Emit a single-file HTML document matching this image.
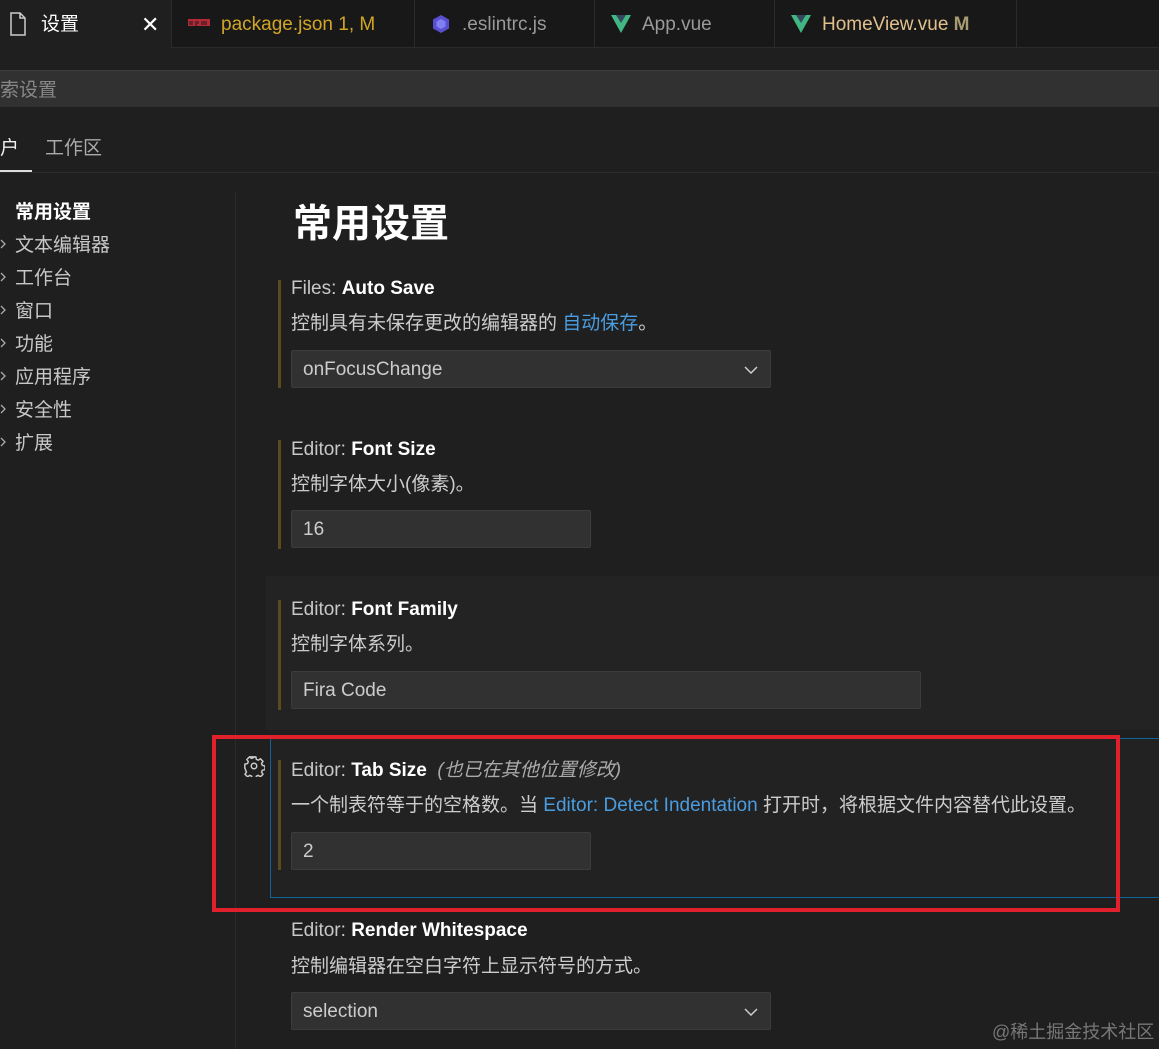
<!DOCTYPE html>
<html><head><meta charset="utf-8"><style>
*{margin:0;padding:0;box-sizing:border-box}
body{width:1159px;height:1049px;background:#1f1f1f;overflow:hidden;position:relative;font-family:"Liberation Sans","Noto Sans CJK SC",sans-serif;color:#ccc}
.a{position:absolute;white-space:nowrap}
.tabs{position:absolute;left:0;top:0;width:1159px;height:48px;background:#181818;border-bottom:1px solid #2b2b2b}
.tab{position:absolute;top:0;height:48px;border-right:1px solid #2b2b2b;font-size:19px;line-height:50px}
.t{font-size:19px;line-height:24px}
.lbl{color:#c8c8c8}.lbl b{color:#fff;font-weight:bold}
.bar{position:absolute;left:278px;width:3px;background:#5c4a1e}
.inp{position:absolute;left:291px;height:38px;background:#313131;border:1px solid #3c3c3c;border-radius:2px;font-size:19px;line-height:38px;padding-left:11px;color:#ccc}
.side{position:absolute;left:15px;font-size:19px;color:#c8c8c8}
.chev{position:absolute;left:0px;width:6px;height:10px}
</style></head><body>
<div class="tabs">
 <div class="tab" style="left:0;width:172px;background:#1f1f1f;color:#fff">
  <svg class="a" style="left:9px;top:12px" width="18" height="24" viewBox="0 0 18 24"><path d="M2 1h9l5 5v17H2z M11 1v5h5" fill="none" stroke="#ccc" stroke-width="1.5"/></svg>
  <span class="a" style="left:41px">设置</span><span class="a" style="left:141px;font-size:22px">✕</span></div>
 <div class="tab" style="left:172px;width:243px;color:#d1a626">
  <svg class="a" style="left:16px;top:19px" width="22" height="8" viewBox="0 0 22 8"><rect x="0" y="0" width="22" height="7" fill="#b62a37"/><path d="M2 2v4M4 2v4M8 2v5M10 2v3M14 2v4M16 2v4M18 2v4" stroke="#181818" stroke-width="1"/></svg>
  <span class="a" style="left:49px">package.json 1, M</span></div>
 <div class="tab" style="left:415px;width:180px;color:#9a9a9a">
  <svg class="a" style="left:16px;top:14px" width="20" height="20" viewBox="0 0 20 20"><polygon points="10,1 18,5.5 18,14.5 10,19 2,14.5 2,5.5" fill="#5a4fcf"/><polygon points="10,5 14.5,7.5 14.5,12.5 10,15 5.5,12.5 5.5,7.5" fill="#8080f2"/></svg>
  <span class="a" style="left:47px">.eslintrc.js</span></div>
 <div class="tab" style="left:595px;width:180px;color:#9a9a9a">
  <svg class="a" style="left:16px;top:15px" width="20" height="18" viewBox="0 0 20 18"><polygon points="0,0 20,0 10,18" fill="#41b883"/><polygon points="5,0 15,0 10,8" fill="#35495e"/></svg>
  <span class="a" style="left:47px">App.vue</span></div>
 <div class="tab" style="left:775px;width:242px;color:#e2c08d">
  <svg class="a" style="left:16px;top:15px" width="20" height="18" viewBox="0 0 20 18"><polygon points="0,0 20,0 10,18" fill="#41b883"/><polygon points="5,0 15,0 10,8" fill="#35495e"/></svg>
  <span class="a" style="left:47px">HomeView.vue <b style="color:#a89b73">M</b></span></div>
</div>
<div class="a" style="left:0;top:70px;width:1159px;height:37px;background:#313131;border-top:1px solid #3c3c3c"></div>
<div class="a t" style="left:0;top:79px;color:#888">索设置</div>
<div class="a t" style="left:0;top:137px;color:#eee">户</div>
<div class="a t" style="left:45px;top:137px;color:#aaa">工作区</div>
<div class="a" style="left:0;top:170px;width:32px;height:2px;background:#ddd"></div>
<div class="a" style="left:0;top:172px;width:1159px;height:1px;background:#2b2b2b"></div>
<div class="a" style="left:235px;top:192px;width:1px;height:857px;background:#2b2b2b"></div>
<div class="side" style="top:197px;color:#fff;font-weight:bold">常用设置</div>
<div class="side" style="top:230px">文本编辑器</div>
<div class="side" style="top:263px">工作台</div>
<div class="side" style="top:296px">窗口</div>
<div class="side" style="top:329px">功能</div>
<div class="side" style="top:362px">应用程序</div>
<div class="side" style="top:395px">安全性</div>
<div class="side" style="top:428px">扩展</div>
<svg class="chev" style="top:239px" viewBox="0 0 6 10"><path d="M1 1l4 4-4 4" fill="none" stroke="#aaa" stroke-width="1.3"/></svg>
<svg class="chev" style="top:272px" viewBox="0 0 6 10"><path d="M1 1l4 4-4 4" fill="none" stroke="#aaa" stroke-width="1.3"/></svg>
<svg class="chev" style="top:305px" viewBox="0 0 6 10"><path d="M1 1l4 4-4 4" fill="none" stroke="#aaa" stroke-width="1.3"/></svg>
<svg class="chev" style="top:338px" viewBox="0 0 6 10"><path d="M1 1l4 4-4 4" fill="none" stroke="#aaa" stroke-width="1.3"/></svg>
<svg class="chev" style="top:371px" viewBox="0 0 6 10"><path d="M1 1l4 4-4 4" fill="none" stroke="#aaa" stroke-width="1.3"/></svg>
<svg class="chev" style="top:404px" viewBox="0 0 6 10"><path d="M1 1l4 4-4 4" fill="none" stroke="#aaa" stroke-width="1.3"/></svg>
<svg class="chev" style="top:437px" viewBox="0 0 6 10"><path d="M1 1l4 4-4 4" fill="none" stroke="#aaa" stroke-width="1.3"/></svg>
<div class="a" style="left:293px;top:200px;font-size:39px;font-weight:bold;color:#fff;line-height:50px">常用设置</div>

<div class="bar" style="top:280px;height:108px"></div>
<div class="a t lbl" style="left:291px;top:277px">Files: <b>Auto Save</b></div>
<div class="a t" style="left:291px;top:312px">控制具有未保存更改的编辑器的 <span style="color:#4a9de0">自动保存</span>。</div>
<div class="inp" style="top:350px;width:480px">onFocusChange<svg class="a" style="right:12px;top:15px" width="14" height="8"><path d="M1 1l6 6 6-6" fill="none" stroke="#ccc" stroke-width="1.5"/></svg></div>

<div class="bar" style="top:440px;height:109px"></div>
<div class="a t lbl" style="left:291px;top:438px">Editor: <b>Font Size</b></div>
<div class="a t" style="left:291px;top:473px">控制字体大小(像素)。</div>
<div class="inp" style="top:510px;width:300px">16</div>

<div class="a" style="left:266px;top:576px;width:893px;height:154px;background:#232323"></div>
<div class="bar" style="top:600px;height:110px"></div>
<div class="a t lbl" style="left:291px;top:598px">Editor: <b>Font Family</b></div>
<div class="a t" style="left:291px;top:633px">控制字体系列。</div>
<div class="inp" style="top:671px;width:630px">Fira Code</div>

<div class="a" style="left:270px;top:738px;width:889px;height:160px;border:1px solid #0e639c;border-right:none;background:#222"></div>
<svg class="a" style="left:243px;top:755px" width="22" height="22" viewBox="0 0 24 24"><path d="M10 2h4l.6 2.8 2 .9 2.4-1.6 2.8 2.8-1.6 2.4.9 2 2.9.7v4l-2.9.6-.9 2 1.6 2.4-2.8 2.8-2.4-1.6-2 .9-.6 2.9h-4l-.6-2.9-2-.9-2.4 1.6-2.8-2.8 1.6-2.4-.9-2L2 14v-4l2.9-.7.9-2-1.6-2.4 2.8-2.8 2.4 1.6 2-.9z" fill="none" stroke="#ccc" stroke-width="1.6"/><circle cx="12" cy="12" r="3" fill="none" stroke="#ccc" stroke-width="1.6"/></svg>
<div class="bar" style="top:760px;height:110px"></div>
<div class="a t lbl" style="left:291px;top:759px">Editor: <b>Tab Size</b> <i style="color:#aaa">&nbsp;(也已在其他位置修改)</i></div>
<div class="a t" style="left:291px;top:794px">一个制表符等于的空格数。当 <span style="color:#4a9de0">Editor: Detect Indentation</span> 打开时，将根据文件内容替代此设置。</div>
<div class="inp" style="top:832px;width:300px">2</div>
<div class="a" style="left:212px;top:735px;width:908px;height:177px;border:4px solid #e0202a"></div>

<div class="a t lbl" style="left:291px;top:919px">Editor: <b>Render Whitespace</b></div>
<div class="a t" style="left:291px;top:955px">控制编辑器在空白字符上显示符号的方式。</div>
<div class="inp" style="top:992px;width:480px">selection<svg class="a" style="right:12px;top:15px" width="14" height="8"><path d="M1 1l6 6 6-6" fill="none" stroke="#ccc" stroke-width="1.5"/></svg></div>
<div class="a" style="left:992px;top:1018px;font-size:18px;color:#777">@稀土掘金技术社区</div>
</body></html>
